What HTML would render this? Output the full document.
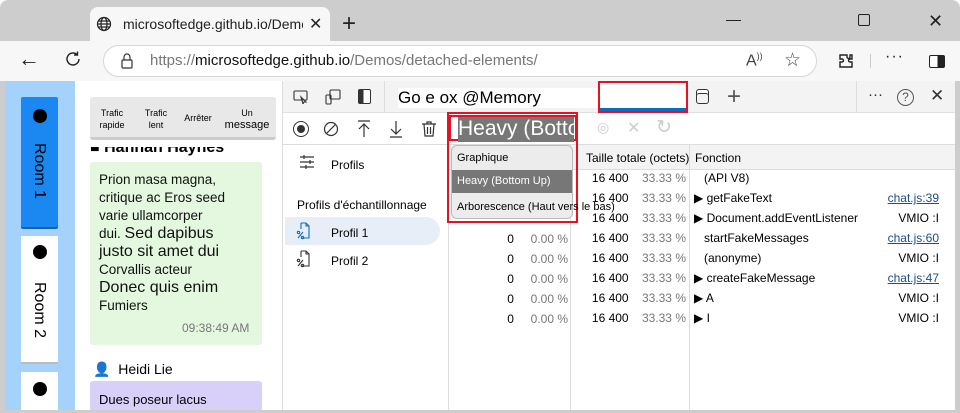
<!DOCTYPE html>
<html><head><meta charset="utf-8"><style>
*{box-sizing:border-box;margin:0;padding:0}
body{width:960px;height:413px;overflow:hidden;background:#fff;font-family:"Liberation Sans",sans-serif;position:relative}
.a{position:absolute}
.t{white-space:nowrap}
</style></head><body>
<div class="a" style="left:0;top:0;width:960px;height:413px;background:#cdcdcd;border-radius:8px 8px 0 0"></div>
<!-- tab -->
<div class="a" style="left:90px;top:7px;width:240px;height:36px;background:#f7f7f7;border-radius:8px 8px 0 0"></div>
<svg class="a" style="left:96px;top:16px" width="16" height="16" viewBox="0 0 16 16" fill="none" stroke="#222" stroke-width="1.2"><circle cx="8" cy="8" r="6.5"/><ellipse cx="8" cy="8" rx="3" ry="6.5"/><path d="M1.5 8h13M2.5 5h11M2.5 11h11"/></svg>
<div class="a t" style="left:123px;top:16px;font-size:14px;color:#222;width:180px;overflow:hidden">microsoftedge.github.io/Demos/d</div>
<div class="a t" style="left:309px;top:14px;font-size:16px;color:#222">✕</div>
<div class="a t" style="left:342px;top:10px;font-size:24px;color:#222;font-weight:300">+</div>
<div class="a" style="top:20px;width:15px;height:1px;background:#222;left:726px"></div>
<div class="a" style="left:858px;top:14px;width:12px;height:12px;border:1.3px solid #222;border-radius:2px"></div>
<div class="a t" style="left:928px;top:11px;font-size:18px;color:#222">✕</div>
<!-- toolbar -->
<div class="a" style="left:0;top:41px;width:960px;height:40px;background:#f7f7f7"></div>
<div class="a t" style="left:18px;top:46px;font-size:22px;color:#222">←</div>
<svg class="a" style="left:64px;top:50px" width="18" height="18" viewBox="0 0 18 18" fill="none" stroke="#222" stroke-width="1.4"><path d="M15 9a6 6 0 1 1-2-4.5M13.5 1.5v3.5H10"/></svg>
<div class="a" style="left:103px;top:45px;width:714px;height:32px;background:#fff;border:1px solid #d6d6d6;border-radius:16px"></div>
<svg class="a" style="left:120px;top:52px" width="14" height="18" viewBox="0 0 14 18" fill="none" stroke="#333" stroke-width="1.2"><rect x="2" y="8" width="10" height="8" rx="1"/><path d="M4 8V5a3 3 0 0 1 6 0v3"/></svg>
<div class="a t" style="left:150px;top:52px;font-size:15px;color:#777">https://<span style="color:#111">microsoftedge.github.io</span>/Demos/detached-elements/</div>
<div class="a t" style="left:746px;top:51px;font-size:16px;color:#444">A<sup style="font-size:9px">))</sup></div>
<div class="a t" style="left:784px;top:49px;font-size:19px;color:#444">☆</div>
<svg class="a" style="left:837px;top:52px" width="18" height="18" viewBox="0 0 18 18" fill="none" stroke="#222" stroke-width="1.4"><path d="M6 3h4v2a1.5 1.5 0 0 0 3 0V3h2v4h-2a1.5 1.5 0 0 0 0 3h2v5H3v-5h2a1.5 1.5 0 0 0 0-3H3V3z"/></svg>
<div class="a" style="left:870px;top:54px;width:1px;height:14px;background:#ccc"></div>
<div class="a t" style="left:885px;top:48px;font-size:16px;color:#222;letter-spacing:1px">···</div>
<div class="a" style="left:929px;top:55px;width:16px;height:13px;border:1.3px solid #222;border-radius:2px;background:linear-gradient(90deg,#fff 55%,#222 55%)"></div>
<!-- content area -->
<div class="a" style="left:5px;top:81px;width:950px;height:329px;background:#fff;border-radius:0 0 6px 6px"></div>
<!-- left page -->
<div class="a" style="left:5px;top:81px;width:277px;height:329px;background:#fff;overflow:hidden">
 <div class="a" style="left:0;top:0;width:70px;height:329px;background:#a5d2fa"></div>
 <div class="a" style="left:16px;top:16px;width:37px;height:130px;background:#1a88f0;border-radius:2px;box-shadow:0 2px 0 #1560b0"></div>
 <div class="a" style="left:28px;top:28px;width:14px;height:14px;border-radius:50%;background:#000"></div>
 <div class="a t" style="left:14px;top:73px;font-size:16px;transform:rotate(90deg);transform-origin:center;width:40px;text-align:center">Room 1</div>
 <div class="a" style="left:16px;top:155px;width:37px;height:126px;background:#fff;box-shadow:0 2px 0 #bbb"></div>
 <div class="a" style="left:28px;top:164px;width:14px;height:14px;border-radius:50%;background:#000"></div>
 <div class="a t" style="left:14px;top:212px;font-size:16px;transform:rotate(90deg);width:40px;text-align:center">Room 2</div>
 <div class="a" style="left:16px;top:291px;width:37px;height:60px;background:#fff"></div>
 <div class="a" style="left:28px;top:301px;width:14px;height:14px;border-radius:50%;background:#000"></div>
 <div class="a t" style="left:85px;top:58px;font-size:16px;font-weight:bold">&#9632; Hannah Haynes</div>
 <div class="a" style="left:80px;top:0;width:197px;height:66px;background:#fff"></div>
 <div class="a" style="left:85px;top:16px;width:186px;height:43px;background:#e8e8e8;border-bottom:3px solid #ccc;border-radius:3px"></div>
 <div class="a" style="left:85px;top:26px;width:44px;text-align:center;font-size:9px;line-height:12px">Trafic<br>rapide</div>
 <div class="a" style="left:129px;top:26px;width:44px;text-align:center;font-size:9px;line-height:12px">Trafic<br>lent</div>
 <div class="a" style="left:173px;top:32px;width:40px;text-align:center;font-size:9px">Arrêter</div>
 <div class="a" style="left:213px;top:26px;width:58px;text-align:center;font-size:9px;line-height:12px">Un<br><span style="font-size:11px">message</span></div>
 <div class="a" style="left:85px;top:81px;width:172px;height:183px;background:#e4f8e0;border-radius:3px"></div>
 <div class="a t" style="left:94px;top:90px;font-size:13.5px;line-height:18px;color:#111">Prion masa magna,<br>critique ac Eros seed<br>varie ullamcorper<br>dui. <span style="font-size:16px">Sed dapibus</span><br><span style="font-size:16px">justo sit amet dui</span><br>Corvallis acteur<br><span style="font-size:16px">Donec quis enim</span><br>Fumiers</div>
 <div class="a t" style="left:177px;top:240px;font-size:12px;color:#777">09:38:49 AM</div>
 <div class="a t" style="left:88px;top:280px;font-size:14px">&#128100;&nbsp; Heidi Lie</div>
 <div class="a" style="left:85px;top:300px;width:172px;height:40px;background:#d8d0f8;border-radius:3px"></div>
 <div class="a t" style="left:94px;top:311px;font-size:13px">Dues poseur lacus</div>
</div>
<!-- devtools -->
<div class="a" style="left:282px;top:81px;width:673px;height:329px;background:#fff;border-left:1px solid #ddd;overflow:hidden">
 <div class="a" style="left:0;top:0;width:673px;height:32px;background:#f3f3f3;border-bottom:1px solid #e0e0e0"></div>
 <svg class="a" style="left:10px;top:9px" width="16" height="14" viewBox="0 0 16 14" fill="none" stroke="#333" stroke-width="1.1"><rect x="1" y="1" width="13" height="9" rx="1"/><path d="M8 7l5 5-2 0-1 2z"/></svg>
 <svg class="a" style="left:42px;top:8px" width="16" height="16" viewBox="0 0 16 16" fill="none" stroke="#333" stroke-width="1.1"><rect x="5" y="1" width="10" height="9" rx="1"/><rect x="1" y="6" width="5" height="9" rx="1"/></svg>
 <div class="a" style="left:75px;top:8px;width:13px;height:15px;border:1.3px solid #333;border-radius:2px;background:linear-gradient(90deg,#333 40%,#fff 40%)"></div>
 <div class="a" style="left:101px;top:0;width:1px;height:32px;background:#ddd"></div>
 <div class="a t" style="left:115px;top:7px;font-size:17px;background:#fff;width:200px;height:20px">Go e ox @Memory</div>
 <div class="a" style="left:315px;top:0;width:90px;height:32px;background:#fff;border:2px solid #e81123"></div>
 <div class="a" style="left:317px;top:27px;width:86px;height:3px;background:#0f6cbd"></div>
 <div class="a" style="left:413px;top:8px;width:13px;height:15px;border:1.3px solid #333;border-radius:3px;box-shadow:inset 0 3px 0 #fff,inset 0 4px 0 #333"></div>
 <div class="a t" style="left:444px;top:2px;font-size:24px;color:#555;font-weight:300">+</div>
 <div class="a" style="left:573px;top:0;width:1px;height:32px;background:#ddd"></div>
 <div class="a t" style="left:585px;top:5px;font-size:15px;color:#333">···</div>
 <div class="a" style="left:614px;top:8px;width:17px;height:17px;border:1.3px solid #555;border-radius:50%;font-size:12px;text-align:center;line-height:14px;color:#555">?</div>
 <div class="a t" style="left:647px;top:5px;font-size:17px;color:#333">✕</div>
 <!-- toolbar2 -->
 <div class="a" style="left:0;top:32px;width:673px;height:32px;border-bottom:1px solid #ddd"></div>
 <div class="a" style="left:10px;top:40px;width:16px;height:16px;border:1.3px solid #333;border-radius:50%"></div>
 <div class="a" style="left:14px;top:44px;width:8px;height:8px;background:#333;border-radius:50%"></div>
 <svg class="a" style="left:40px;top:40px" width="16" height="16" viewBox="0 0 16 16" fill="none" stroke="#333" stroke-width="1.2"><circle cx="8" cy="8" r="6.5"/><path d="M3.5 12.5l9-9"/></svg>
 <svg class="a" style="left:74px;top:39px" width="14" height="18" viewBox="0 0 14 18" fill="none" stroke="#333" stroke-width="1.2"><path d="M1 1h12M7 17V4M2 9l5-5 5 5"/></svg>
 <svg class="a" style="left:106px;top:39px" width="14" height="18" viewBox="0 0 14 18" fill="none" stroke="#333" stroke-width="1.2"><path d="M1 17h12M7 1v13M2 9l5 5 5-5"/></svg>
 <svg class="a" style="left:138px;top:39px" width="16" height="18" viewBox="0 0 16 18" fill="none" stroke="#333" stroke-width="1.2"><path d="M1 4h14M6 4V2h4v2M3 4l1 12h8l1-12M6.5 7v7M9.5 7v7"/></svg>
 <div class="a" style="left:166px;top:34px;width:128px;height:26px;border:2px solid #e81123"></div>
 <div class="a t" style="left:175px;top:36px;width:116px;height:25px;background:#777;color:#fff;font-size:21px;overflow:hidden;line-height:24px">Heavy (Botto</div>
 <div class="a t" style="left:314px;top:38px;font-size:14px;color:#ccc">◎</div>
 <div class="a t" style="left:344px;top:37px;font-size:16px;color:#ccc">✕</div>
 <div class="a t" style="left:373px;top:35px;font-size:19px;color:#ccc">↻</div>
 <!-- left panel -->
 <svg class="a" style="left:17px;top:74px" width="14" height="14" viewBox="0 0 14 14" stroke="#333" stroke-width="1.2"><path d="M0 2h14M0 7h14M0 12h14M4 0v4M10 5v4M6 10v4"/></svg>
 <div class="a t" style="left:48px;top:77px;font-size:12px">Profils</div>
 <div class="a t" style="left:14px;top:117px;font-size:12px">Profils d'échantillonnage</div>
 <div class="a" style="left:2px;top:136px;width:155px;height:28px;background:#e8eef8;border-radius:0 14px 14px 0"></div>
 <svg class="a" style="left:13px;top:141px" width="14" height="18" viewBox="0 0 14 18" fill="none" stroke="#0f6cbd" stroke-width="1.1"><path d="M5 1h5l3 3v12H6M5 1v6M10 1v3h3M2 16l5-6"/><circle cx="2.5" cy="10.5" r="1.2"/><circle cx="6.5" cy="15.5" r="1.2"/></svg>
 <div class="a t" style="left:48px;top:145px;font-size:12px">Profil 1</div>
 <svg class="a" style="left:13px;top:169px" width="14" height="18" viewBox="0 0 14 18" fill="none" stroke="#333" stroke-width="1.1"><path d="M5 1h5l3 3v12H6M5 1v6M10 1v3h3M2 16l5-6"/><circle cx="2.5" cy="10.5" r="1.2"/><circle cx="6.5" cy="15.5" r="1.2"/></svg>
 <div class="a t" style="left:48px;top:173px;font-size:12px">Profil 2</div>
 <!-- table -->
 <div class="a" style="left:165px;top:64px;width:508px;height:25px;background:#f3f3f3;border-bottom:1px solid #ddd"></div>
 <div class="a" style="left:165px;top:64px;width:1px;height:265px;background:#ddd"></div>
 <div class="a" style="left:287px;top:64px;width:1px;height:265px;background:#ddd"></div>
 <div class="a" style="left:406px;top:64px;width:1px;height:265px;background:#ddd"></div>
 <div class="a t" style="left:303px;top:70px;font-size:12px">Taille totale (octets)</div>
 <div class="a t" style="left:412px;top:70px;font-size:12px">Fonction</div>
 <div class="a" style="left:175px;top:88px;font-size:12px;line-height:20px;text-align:right;width:110px">
  <div style="height:20px"></div><div style="height:20px"></div><div style="height:20px"></div>
  <div>0&nbsp;&nbsp;&nbsp;&nbsp;&nbsp;<span style="color:#777">0.00 %</span></div><div>0&nbsp;&nbsp;&nbsp;&nbsp;&nbsp;<span style="color:#777">0.00 %</span></div><div>0&nbsp;&nbsp;&nbsp;&nbsp;&nbsp;<span style="color:#777">0.00 %</span></div><div>0&nbsp;&nbsp;&nbsp;&nbsp;&nbsp;<span style="color:#777">0.00 %</span></div><div>0&nbsp;&nbsp;&nbsp;&nbsp;&nbsp;<span style="color:#777">0.00 %</span></div>
 </div>
 <div class="a" style="left:290px;top:87px;font-size:12px;line-height:20px;text-align:right;width:113px">
  <div>16 400&nbsp;&nbsp;&nbsp;&nbsp;<span style="color:#777">33.33 %</span></div><div>16 400&nbsp;&nbsp;&nbsp;&nbsp;<span style="color:#777">33.33 %</span></div><div>16 400&nbsp;&nbsp;&nbsp;&nbsp;<span style="color:#777">33.33 %</span></div><div>16 400&nbsp;&nbsp;&nbsp;&nbsp;<span style="color:#777">33.33 %</span></div><div>16 400&nbsp;&nbsp;&nbsp;&nbsp;<span style="color:#777">33.33 %</span></div><div>16 400&nbsp;&nbsp;&nbsp;&nbsp;<span style="color:#777">33.33 %</span></div><div>16 400&nbsp;&nbsp;&nbsp;&nbsp;<span style="color:#777">33.33 %</span></div><div>16 400&nbsp;&nbsp;&nbsp;&nbsp;<span style="color:#777">33.33 %</span></div>
 </div>
 <div class="a t" style="left:411px;top:87px;font-size:12px;line-height:20px;width:245px">
  <div>&nbsp;&nbsp; (API V8)</div>
  <div>▶ getFakeText<span style="float:right;color:#1a4f8a;text-decoration:underline">chat.js:39</span></div>
  <div>▶ Document.addEventListener<span style="float:right">VMIO :I</span></div>
  <div>&nbsp;&nbsp; startFakeMessages<span style="float:right;color:#1a4f8a;text-decoration:underline">chat.js:60</span></div>
  <div>&nbsp;&nbsp; (anonyme)<span style="float:right">VMIO :I</span></div>
  <div>▶ createFakeMessage<span style="float:right;color:#1a4f8a;text-decoration:underline">chat.js:47</span></div>
  <div>▶ A<span style="float:right">VMIO :I</span></div>
  <div>▶ I<span style="float:right">VMIO :I</span></div>
 </div>
 <!-- dropdown -->
 <div class="a" style="left:164px;top:31px;width:131px;height:111px;border:2px solid #e81123"></div>
 <div class="a" style="left:168px;top:64px;width:122px;height:74px;background:#ececec;border:1px solid #bbb;border-radius:6px"></div>
 <div class="a t" style="left:174px;top:71px;font-size:11px">Graphique</div>
 <div class="a t" style="left:169px;top:89px;width:120px;height:23px;background:#777;color:#fff;font-size:11px;line-height:23px;padding-left:5px">Heavy (Bottom Up)</div>
 <div class="a t" style="left:174px;top:120px;font-size:11px">Arborescence (Haut vers le bas)</div>
</div>
</body></html>
